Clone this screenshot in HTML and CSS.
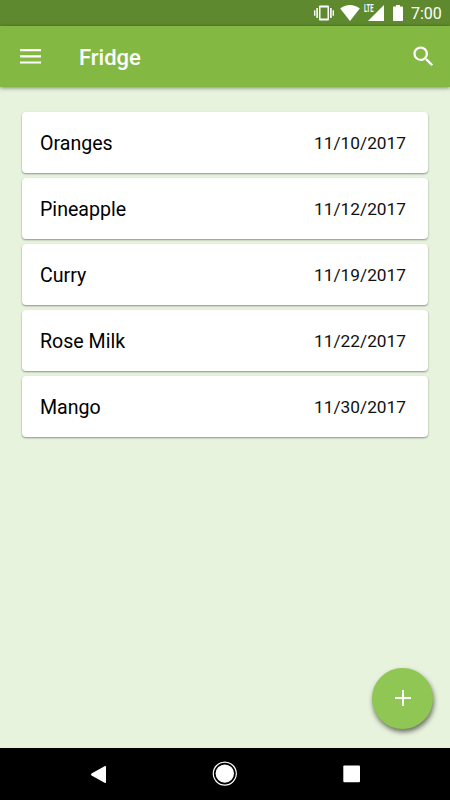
FILE: index.html
```html
<!DOCTYPE html>
<html lang="en">
<head>
    <meta charset="UTF-8">
    <meta name="viewport" content="width=device-width, initial-scale=1.0">
    <title>Fridge</title>
    <link rel="stylesheet" href="styles.css">
</head>
<body>
<div class="status-bar">
    <svg class="vibrate" width="20" height="16" viewBox="0 0 20 16">
        <path d="M6 .5h8a1 1 0 0 1 1 1v13a1 1 0 0 1-1 1H6a1 1 0 0 1-1-1v-13a1 1 0 0 1 1-1zm.5 2v11h7v-11zM2.300 3h1.600v10H2.300zM0 5.300h1.400v5.400H0zM16.100 3h1.600v10h-1.600zM18.600 5.300H20v5.400h-1.400z" fill-rule="evenodd"/>
    </svg>
    <svg class="wifi" width="20" height="16" viewBox="0 0 20 16">
        <path d="M10 16L.2 3.600C3 1.200 6.400 0 10 0s7 1.200 9.800 3.600z"/>
    </svg>
    <div class="signal">
        <span class="lte">LTE</span>
        <svg width="16" height="16" viewBox="0 0 16 16"><path d="M0 16L16 0v16z"/></svg>
    </div>
    <svg class="battery" width="10" height="16" viewBox="0 0 10 16">
        <path d="M3 0h4v1.600h2.200a.8.8 0 0 1 .8.8v12.800a.8.8 0 0 1-.8.8H.8a.8.8 0 0 1-.8-.8V2.400a.8.8 0 0 1 .8-.8H3z"/>
    </svg>
    <span class="time">7:00</span>
</div>

<header class="toolbar">
    <svg class="menu" width="21" height="15" viewBox="0 0 21 15">
        <path d="M0 .1h21v2.200H0zM0 6.300h21v2.200H0zM0 12.400h21v2.200H0z"/>
    </svg>
    <h1>Fridge</h1>
    <svg class="search" width="27" height="27" viewBox="0 0 24 24">
        <path d="M15.500 14h-.79l-.28-.27A6.471 6.471 0 0 0 16 9.500 6.500 6.500 0 1 0 9.500 16c1.610 0 3.090-.59 4.230-1.570l.27.28v.79l5 4.990L20.490 19l-4.990-5zm-6 0C7.010 14 5 11.990 5 9.500S7.010 5 9.500 5 14 7.010 14 9.500 11.990 14 9.500 14z"/>
    </svg>
</header>

<main class="content">
    <ul class="items">
        <li class="card"><span class="name">Oranges</span><span class="date">11/10/2017</span></li>
        <li class="card"><span class="name">Pineapple</span><span class="date">11/12/2017</span></li>
        <li class="card"><span class="name">Curry</span><span class="date">11/19/2017</span></li>
        <li class="card"><span class="name">Rose Milk</span><span class="date">11/22/2017</span></li>
        <li class="card"><span class="name">Mango</span><span class="date">11/30/2017</span></li>
    </ul>
    <button class="fab" aria-label="Add item">
        <svg width="16" height="16" viewBox="0 0 16 16"><path d="M7 0h2v7h7v2H9v7H7V9H0V7h7z"/></svg>
    </button>
</main>

<nav class="nav-bar">
    <svg width="26" height="26" viewBox="0 0 26 26">
        <path d="M5.500 12.500L19 5q1-.4 1 .7v15.600q0 1.100-1 .7L5.500 14.500q-1-1 0-2z"/>
    </svg>
    <svg width="26" height="26" viewBox="0 0 26 26">
        <circle cx="12.800" cy="12.600" r="11.500" fill="none" stroke="#fff" stroke-width="1.200"/>
        <circle cx="12.800" cy="12.600" r="9.200"/>
    </svg>
    <svg width="26" height="26" viewBox="0 0 26 26">
        <rect x="5.300" y="4.500" width="16.700" height="16.700" rx="1"/>
    </svg>
</nav>
</body>
</html>
```
FILE: styles.css
```css
* {
    margin: 0;
    padding: 0;
    box-sizing: border-box;
}
body {
    display: flex;
    flex-direction: column;
    height: 100vh;
    overflow: hidden;
    background: #e7f3dd;
    font-family: Roboto, sans-serif;
    color: #000;
}
svg {
    display: block;
    flex-shrink: 0;
    fill: #fff;
}

.status-bar {
    display: flex;
    align-items: center;
    justify-content: flex-end;
    height: 26px;
    padding-right: 9px;
    background: #5f892f;
    color: #fff;
}
.wifi { margin-left: 6px; }
.signal {
    position: relative;
    margin-left: 8px;
}
.lte {
    position: absolute;
    left: -4px;
    top: 0;
    font-size: 10.5px;
    font-weight: 700;
    line-height: 8px;
    transform: scaleX(0.56);
    transform-origin: left;
}
.battery { margin-left: 9px; }
.time {
    width: 30px;
    margin-left: 8px;
    padding-top: 2px;
    font-size: 16px;
    line-height: 26px;
    white-space: nowrap;
}

.toolbar {
    display: flex;
    align-items: center;
    height: 61px;
    padding: 0 13px 0 20px;
    background: #83b943;
    box-shadow: 0 1px 4px rgba(0,0,0,0.45);
    z-index: 1;
}
.toolbar h1 {
    flex: 1;
    margin-left: 38px;
    padding-top: 3px;
    font-size: 22px;
    font-weight: 500;
    line-height: 26px;
    color: #fff;
}

.content {
    flex: 1;
    position: relative;
    padding: 25px 22px;
}
.items {
    display: flex;
    flex-direction: column;
    gap: 5px;
    list-style: none;
}
.card {
    display: flex;
    align-items: center;
    justify-content: space-between;
    height: 61px;
    padding: 0 22px 0 18px;
    background: #fff;
    border-radius: 4px;
    box-shadow: 0 1px 2px rgba(0,0,0,0.4);
}
.name {
    padding-top: 2px;
    font-size: 19.6px;
}
.date {
    font-size: 17.3px;
    color: #111;
}
.fab {
    position: absolute;
    right: 17px;
    bottom: 19px;
    display: flex;
    align-items: center;
    justify-content: center;
    width: 61px;
    height: 61px;
    padding-bottom: 1px;
    border: none;
    border-radius: 50%;
    background: #90c653;
    box-shadow: 1px 3px 5px rgba(0,0,0,0.55);
}

.nav-bar {
    display: flex;
    align-items: center;
    justify-content: space-between;
    height: 52px;
    padding: 0 86px 1px;
    background: #000;
}
```
